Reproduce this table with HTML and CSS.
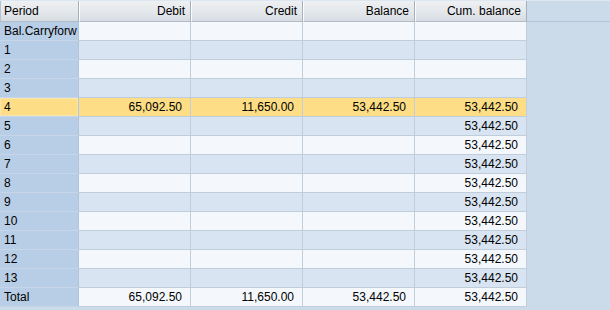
FILE: index.html
```html
<!DOCTYPE html>
<html>
<head>
<meta charset="utf-8">
<link rel="stylesheet" href="styles.css">
</head>
<body>
<div class="grid">
  <table class="tbl">
    <thead>
      <tr>
        <th class="per">Period</th>
        <th>Debit</th>
        <th>Credit</th>
        <th>Balance</th>
        <th>Cum. balance</th>
      </tr>
    </thead>
    <tbody>
      <tr class="w"><td class="per">Bal.Carryforw</td><td></td><td></td><td></td><td></td></tr>
      <tr class="b"><td class="per">1</td><td></td><td></td><td></td><td></td></tr>
      <tr class="w"><td class="per">2</td><td></td><td></td><td></td><td></td></tr>
      <tr class="b"><td class="per">3</td><td></td><td></td><td></td><td></td></tr>
      <tr class="sel"><td class="per">4</td><td>65,092.50</td><td>11,650.00</td><td>53,442.50</td><td>53,442.50</td></tr>
      <tr class="b"><td class="per">5</td><td></td><td></td><td></td><td>53,442.50</td></tr>
      <tr class="w"><td class="per">6</td><td></td><td></td><td></td><td>53,442.50</td></tr>
      <tr class="b"><td class="per">7</td><td></td><td></td><td></td><td>53,442.50</td></tr>
      <tr class="w"><td class="per">8</td><td></td><td></td><td></td><td>53,442.50</td></tr>
      <tr class="b"><td class="per">9</td><td></td><td></td><td></td><td>53,442.50</td></tr>
      <tr class="w"><td class="per">10</td><td></td><td></td><td></td><td>53,442.50</td></tr>
      <tr class="b"><td class="per">11</td><td></td><td></td><td></td><td>53,442.50</td></tr>
      <tr class="w"><td class="per">12</td><td></td><td></td><td></td><td>53,442.50</td></tr>
      <tr class="b"><td class="per">13</td><td></td><td></td><td></td><td>53,442.50</td></tr>
      <tr class="w"><td class="per">Total</td><td>65,092.50</td><td>11,650.00</td><td>53,442.50</td><td>53,442.50</td></tr>
    </tbody>
  </table>
</div>
</body>
</html>
```

FILE: styles.css
```css
html, body {
  margin: 0;
  padding: 0;
  background: #ccdbe9;
  width: 610px;
  height: 310px;
  overflow: hidden;
}
.grid {
  border-top: 1px solid #dde7f1;
  position: relative;
}
.grid::before {
  content: "";
  display: block;
  position: absolute;
  left: 0;
  right: 0;
  top: 20px;
  height: 1px;
  background: #b4c4d4;
}
.tbl {
  border-collapse: separate;
  border-spacing: 0;
  font-family: "Liberation Sans", Arial, sans-serif;
  font-size: 12px;
  color: #000;
  table-layout: fixed;
  position: relative;
}
.tbl th {
  height: 21px;
  padding: 0 5px 0 0;
  box-sizing: border-box;
  width: 112px;
  font-weight: normal;
  text-align: right;
  background: linear-gradient(#eef0f2, #e3e7eb 60%, #d6dce2);
  border-right: 1px solid #a7b0ba;
  border-left: 1px solid #fbfcfd;
  border-bottom: 1px solid #b0bcc8;
  white-space: nowrap;
}
.tbl th.per {
  width: 79px;
  text-align: left;
  padding-left: 3px;
  border-left: 1px solid #b4c2d0;
}
.tbl td {
  height: 19px;
  box-sizing: border-box;
  padding: 0 8px 0 0;
  text-align: right;
  border-right: 1px solid #c0cedc;
  border-bottom: 1px solid #c0cedc;
  white-space: nowrap;
  overflow: hidden;
}
.tbl td.per {
  text-align: left;
  padding: 0 0 0 4px;
  background: #b8cee6;
  border-right: 1px solid #b2c4d8;
  border-bottom: 1px solid #c6d6e8;
  text-overflow: clip;
}
.w td { background: #f4f8fc; }
.b td { background: #d8e4f2; }
.sel td {
  background: #fddd86;
  border-bottom-color: #c0cedc;
}
.sel td.per {
  background: #fddd86;
  box-shadow: inset 0 0 0 1px #f7e6b0;
}
```
